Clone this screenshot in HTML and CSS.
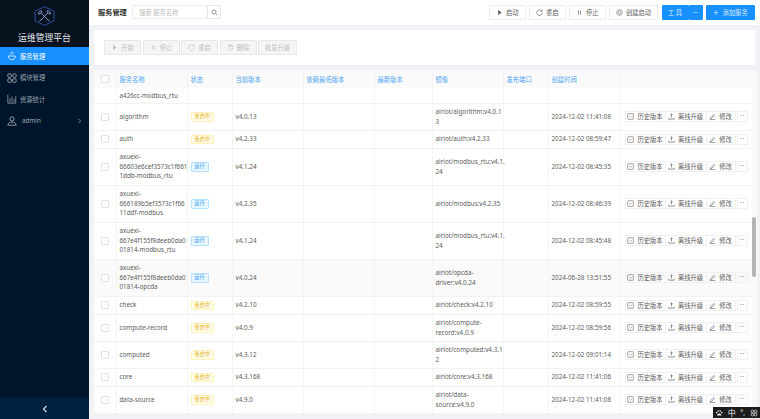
FILE: index.html
```html
<!DOCTYPE html>
<html lang="zh-CN">
<head>
    <meta charset="UTF-8">
    <title>服务管理 - 运维管理平台</title>
    <link rel="stylesheet" href="styles.css">
</head>
<body>
    <svg class="sprites" width="0" height="0">
        <symbol id="i-play" viewBox="0 0 10 10"><path d="M3 1.500 8 5 3 8.500z" fill="currentColor"/></symbol>
        <symbol id="i-reload" viewBox="0 0 10 10"><path d="M8.300 3A4 4 0 1 0 9 5.400M8.600 1v2.300H6.300" fill="none" stroke="currentColor" stroke-width=".9"/></symbol>
        <symbol id="i-pause" viewBox="0 0 10 10"><path d="M3.500 2v6M6.500 2v6" fill="none" stroke="currentColor"/></symbol>
        <symbol id="i-create" viewBox="0 0 10 10"><circle cx="5" cy="5" r="4" fill="none" stroke="currentColor" stroke-width=".8"/><circle cx="5" cy="5" r="1.800" fill="none" stroke="currentColor" stroke-width=".8"/></symbol>
        <symbol id="i-trash" viewBox="0 0 10 10"><path d="M2.500 2.500h5v6h-5zM2 2h6M4 1.200h2" fill="none" stroke="currentColor" stroke-width=".8"/></symbol>
        <symbol id="i-history" viewBox="0 0 10 10"><rect x="1" y="1" width="8" height="8" rx=".8" fill="none" stroke="currentColor" stroke-width=".8"/><path d="M3.500 4.500 5 6l1.500-1.500" fill="none" stroke="currentColor" stroke-width=".8"/></symbol>
        <symbol id="i-upload" viewBox="0 0 10 10"><path d="M5 1v5.500M3.300 3 5 1.300 6.700 3M1 7v1.800h8V7" fill="none" stroke="currentColor" stroke-width=".9"/></symbol>
        <symbol id="i-edit" viewBox="0 0 10 10"><path d="M2 7 6.800 2l1.400 1.300L3.300 8.200 1.800 8.300zM1 9.300h8" fill="none" stroke="currentColor" stroke-width=".8"/></symbol>
    </svg>

    <div class="layout">
        <aside class="sidebar">
            <div class="logo">
                <svg class="logo-mark" viewBox="0 0 21 20">
                    <path d="M10.500 .7 20 5.200v9.600l-9.500 4.500L1 14.800V5.200z" fill="none" stroke="#2d4fa3" stroke-width="1"/>
                    <path d="M6.500 14.500 14 6.800M13 5.200a2.400 2.400 0 0 1 3.400 2.800l-1.700-.4-1.100-1.100zM14.500 14.500 7 6.800M8 5.200a2.400 2.400 0 0 0-3.400 2.800l1.700-.4 1.100-1.100zM5.500 15.200l1.200-1.500M15.500 15.200l-1.200-1.500" fill="none" stroke="#8ea5d6" stroke-width=".9"/>
                </svg>
                <div class="logo-title">运维管理平台</div>
            </div>
            <ul class="menu">
                <li class="menu-item active">
                    <svg class="menu-icon" viewBox="0 0 12 12"><path d="M1.500 6h8.500c0 3-2 4.500-4 4.500S1.500 9 1.500 6zM5 4.500a1.500 1.500 0 1 1 2.500-1.200M6 1.500h1" fill="none" stroke="#fff" stroke-width=".9"/></svg>
                    <span>服务管理</span>
                </li>
                <li class="menu-item">
                    <svg class="menu-icon" viewBox="0 0 12 12"><g fill="none" stroke="#b9c2cc" stroke-width=".9"><rect x="1" y="1" width="4.200" height="4.200" rx="1"/><circle cx="9" cy="3.100" r="2.200"/><rect x="1" y="7" width="4.200" height="4.200" rx="1"/><rect x="6.800" y="7" width="4.200" height="4.200" rx="1"/></g></svg>
                    <span>模块管理</span>
                </li>
                <li class="menu-item">
                    <svg class="menu-icon" viewBox="0 0 12 12"><path d="M1 1v10h10M3.500 5v5M6 3v7M8.500 6v4M10.500 2.500v8" fill="none" stroke="#8f99a5" stroke-width="1"/></svg>
                    <span>资源统计</span>
                </li>
                <li class="menu-item">
                    <svg class="menu-icon" viewBox="0 0 12 12"><circle cx="6" cy="3.500" r="2.500" fill="none" stroke="#b9c2cc" stroke-width=".9"/><path d="M1 11c0-5 10-5 10 0z" fill="none" stroke="#b9c2cc" stroke-width=".9"/></svg>
                    <span class="menu-user">admin</span>
                    <svg class="menu-arrow" viewBox="0 0 6 8"><path d="M1.500 1 4.500 4l-3 3" fill="none" stroke="#8f99a5"/></svg>
                </li>
            </ul>
            <div class="collapse-bar">
                <svg viewBox="0 0 6 8"><path d="M4.500 1 1.500 4l3 3" fill="none" stroke="#dfe5ec" stroke-width="1.100"/></svg>
            </div>
        </aside>

        <div class="main">
            <header class="topbar">
                <h1 class="page-title">服务管理</h1>
                <div class="search">
                    <input class="search-input" type="text" placeholder="搜索 服务名称">
                    <button class="search-btn">
                        <svg viewBox="0 0 10 10"><circle cx="4.300" cy="4.300" r="3" fill="none" stroke="#666" stroke-width=".9"/><path d="M6.500 6.500 9 9" stroke="#666" stroke-width=".9"/></svg>
                    </button>
                </div>
                <div class="top-actions">
                    <button class="btn w-start"><svg class="ico"><use href="#i-play"/></svg>启动</button>
                    <button class="btn w-start"><svg class="ico"><use href="#i-reload"/></svg>重启</button>
                    <button class="btn w-start"><svg class="ico"><use href="#i-pause"/></svg>停止</button>
                    <button class="btn w-create"><svg class="ico"><use href="#i-create"/></svg>创建启动</button>
                    <div class="split">
                        <button class="btn primary w-tool">工 具</button>
                        <button class="btn primary w-dots">···</button>
                    </div>
                    <button class="btn primary w-add"><span class="plus">+</span>添加服务</button>
                </div>
            </header>

            <section class="toolbar">
                <button class="btn disabled"><svg class="ico"><use href="#i-play"/></svg>开始</button>
                <button class="btn disabled"><svg class="ico"><use href="#i-pause"/></svg>停止</button>
                <button class="btn disabled"><svg class="ico"><use href="#i-reload"/></svg>重启</button>
                <button class="btn disabled"><svg class="ico"><use href="#i-trash"/></svg>删除</button>
                <button class="btn disabled">批量升级</button>
            </section>

            <section class="table-card">
                <table class="service-table">
                    <colgroup>
                        <col class="c-check"><col class="c-name"><col class="c-status"><col class="c-ver"><col class="c-ver">
                        <col class="c-latest"><col class="c-ver"><col class="c-port"><col class="c-time"><col>
                    </colgroup>
                    <thead>
                        <tr>
                            <th><span class="check"></span></th>
                            <th>服务名称</th><th>状态</th><th>当前版本</th><th>依赖最低版本</th>
                            <th>最新版本</th><th>镜像</th><th>发布端口</th><th>创建时间</th><th></th>
                        </tr>
                    </thead>
                    <tbody>
                        <tr class="row-cut">
                            <td></td><td>a426cc-modbus_rtu</td><td></td><td></td><td></td><td></td><td></td><td></td><td></td><td></td>
                        </tr>
                        <tr class="row-m">
                            <td><span class="check"></span></td><td>algorithm</td><td><span class="tag warn">重启中</span></td><td>v4.0.13</td><td></td><td></td>
                            <td>airiot/algorithm:v4.0.1<br>3</td><td></td><td>2024-12-02 11:41:08</td>
                            <td><div class="ops"><span class="op w-hist"><svg class="ico"><use href="#i-history"/></svg>历史版本</span><span class="op w-up"><svg class="ico"><use href="#i-upload"/></svg>离线升级</span><span class="op w-edit"><svg class="ico"><use href="#i-edit"/></svg>修改</span><span class="op-more">···</span></div></td>
                        </tr>
                        <tr class="row-s">
                            <td><span class="check"></span></td><td>auth</td><td><span class="tag warn">重启中</span></td><td>v4.2.33</td><td></td><td></td>
                            <td>airiot/auth:v4.2.33</td><td></td><td>2024-12-02 08:59:47</td>
                            <td><div class="ops"><span class="op w-hist"><svg class="ico"><use href="#i-history"/></svg>历史版本</span><span class="op w-up"><svg class="ico"><use href="#i-upload"/></svg>离线升级</span><span class="op w-edit"><svg class="ico"><use href="#i-edit"/></svg>修改</span><span class="op-more">···</span></div></td>
                        </tr>
                        <tr class="row-l">
                            <td><span class="check"></span></td><td>axuexi-<br>66603e6cef3573c1f661<br>1ddb-modbus_rtu</td><td><span class="tag run">运行</span></td><td>v4.1.24</td><td></td><td></td>
                            <td>airiot/modbus_rtu:v4.1.<br>24</td><td></td><td>2024-12-02 08:45:35</td>
                            <td><div class="ops"><span class="op w-hist"><svg class="ico"><use href="#i-history"/></svg>历史版本</span><span class="op w-up"><svg class="ico"><use href="#i-upload"/></svg>离线升级</span><span class="op w-edit"><svg class="ico"><use href="#i-edit"/></svg>修改</span><span class="op-more">···</span></div></td>
                        </tr>
                        <tr class="row-l">
                            <td><span class="check"></span></td><td>axuexi-<br>666189b5ef3573c1f66<br>11ddf-modbus</td><td><span class="tag run">运行</span></td><td>v4.2.35</td><td></td><td></td>
                            <td>airiot/modbus:v4.2.35</td><td></td><td>2024-12-02 08:46:39</td>
                            <td><div class="ops"><span class="op w-hist"><svg class="ico"><use href="#i-history"/></svg>历史版本</span><span class="op w-up"><svg class="ico"><use href="#i-upload"/></svg>离线升级</span><span class="op w-edit"><svg class="ico"><use href="#i-edit"/></svg>修改</span><span class="op-more">···</span></div></td>
                        </tr>
                        <tr class="row-l">
                            <td><span class="check"></span></td><td>axuexi-<br>667e4f155f8deeb0da0<br>01814-modbus_rtu</td><td><span class="tag run">运行</span></td><td>v4.1.24</td><td></td><td></td>
                            <td>airiot/modbus_rtu:v4.1.<br>24</td><td></td><td>2024-12-02 08:45:48</td>
                            <td><div class="ops"><span class="op w-hist"><svg class="ico"><use href="#i-history"/></svg>历史版本</span><span class="op w-up"><svg class="ico"><use href="#i-upload"/></svg>离线升级</span><span class="op w-edit"><svg class="ico"><use href="#i-edit"/></svg>修改</span><span class="op-more">···</span></div></td>
                        </tr>
                        <tr class="row-l hover">
                            <td><span class="check"></span></td><td>axuexi-<br>667e4f155f8deeb0da0<br>01814-opcda</td><td><span class="tag run">运行</span></td><td>v4.0.24</td><td></td><td></td>
                            <td>airiot/opcda-<br>driver:v4.0.24</td><td></td><td>2024-06-28 13:51:55</td>
                            <td><div class="ops"><span class="op w-hist"><svg class="ico"><use href="#i-history"/></svg>历史版本</span><span class="op w-up"><svg class="ico"><use href="#i-upload"/></svg>离线升级</span><span class="op w-edit"><svg class="ico"><use href="#i-edit"/></svg>修改</span><span class="op-more">···</span></div></td>
                        </tr>
                        <tr class="row-s">
                            <td><span class="check"></span></td><td>check</td><td><span class="tag warn">重启中</span></td><td>v4.2.10</td><td></td><td></td>
                            <td>airiot/check:v4.2.10</td><td></td><td>2024-12-02 08:59:55</td>
                            <td><div class="ops"><span class="op w-hist"><svg class="ico"><use href="#i-history"/></svg>历史版本</span><span class="op w-up"><svg class="ico"><use href="#i-upload"/></svg>离线升级</span><span class="op w-edit"><svg class="ico"><use href="#i-edit"/></svg>修改</span><span class="op-more">···</span></div></td>
                        </tr>
                        <tr class="row-m">
                            <td><span class="check"></span></td><td>compute-record</td><td><span class="tag warn">重启中</span></td><td>v4.0.9</td><td></td><td></td>
                            <td>airiot/compute-<br>record:v4.0.9</td><td></td><td>2024-12-02 08:59:56</td>
                            <td><div class="ops"><span class="op w-hist"><svg class="ico"><use href="#i-history"/></svg>历史版本</span><span class="op w-up"><svg class="ico"><use href="#i-upload"/></svg>离线升级</span><span class="op w-edit"><svg class="ico"><use href="#i-edit"/></svg>修改</span><span class="op-more">···</span></div></td>
                        </tr>
                        <tr class="row-m">
                            <td><span class="check"></span></td><td>computed</td><td><span class="tag warn">重启中</span></td><td>v4.3.12</td><td></td><td></td>
                            <td>airiot/computed:v4.3.1<br>2</td><td></td><td>2024-12-02 09:01:14</td>
                            <td><div class="ops"><span class="op w-hist"><svg class="ico"><use href="#i-history"/></svg>历史版本</span><span class="op w-up"><svg class="ico"><use href="#i-upload"/></svg>离线升级</span><span class="op w-edit"><svg class="ico"><use href="#i-edit"/></svg>修改</span><span class="op-more">···</span></div></td>
                        </tr>
                        <tr class="row-s">
                            <td><span class="check"></span></td><td>core</td><td><span class="tag warn">重启中</span></td><td>v4.3.168</td><td></td><td></td>
                            <td>airiot/core:v4.3.168</td><td></td><td>2024-12-02 11:41:06</td>
                            <td><div class="ops"><span class="op w-hist"><svg class="ico"><use href="#i-history"/></svg>历史版本</span><span class="op w-up"><svg class="ico"><use href="#i-upload"/></svg>离线升级</span><span class="op w-edit"><svg class="ico"><use href="#i-edit"/></svg>修改</span><span class="op-more">···</span></div></td>
                        </tr>
                        <tr class="row-m">
                            <td><span class="check"></span></td><td>data-source</td><td><span class="tag warn">重启中</span></td><td>v4.9.0</td><td></td><td></td>
                            <td>airiot/data-<br>source:v4.9.0</td><td></td><td>2024-12-02 11:41:08</td>
                            <td><div class="ops"><span class="op w-hist"><svg class="ico"><use href="#i-history"/></svg>历史版本</span><span class="op w-up"><svg class="ico"><use href="#i-upload"/></svg>离线升级</span><span class="op w-edit"><svg class="ico"><use href="#i-edit"/></svg>修改</span><span class="op-more">···</span></div></td>
                        </tr>
                    </tbody>
                </table>
                <div class="scroll-track"><div class="scroll-thumb"></div></div>
            </section>
        </div>
    </div>

    <div class="ime">
        <svg viewBox="0 0 10 10"><circle cx="2" cy="4.500" r="1" fill="#eee"/><circle cx="4" cy="2.500" r="1" fill="#eee"/><circle cx="6.500" cy="2.500" r="1" fill="#eee"/><circle cx="8.500" cy="4.500" r="1" fill="#eee"/><path d="M2.500 8c0-3 5.500-3 5.500 0z" fill="#eee"/></svg>
        <span>中</span>
        <span class="ime-punct">°,</span>
        <svg viewBox="0 0 10 10"><g fill="none" stroke="#ddd" stroke-width="1"><circle cx="3" cy="3" r="1.700"/><circle cx="7" cy="3" r="1.700"/><circle cx="3" cy="7" r="1.700"/><circle cx="7" cy="7" r="1.700"/></g></svg>
    </div>
</body>
</html>
```

FILE: styles.css
```css
* {
    box-sizing: border-box;
    margin: 0;
    padding: 0;
    font-family: "Noto Sans", "Noto Sans CJK SC", sans-serif;
}

body {
    width: 760px;
    height: 419px;
    overflow: hidden;
    background-color: #f0f2f5;
    color: #5c5c5c;
    font-size: 6.300px;
}

.sprites {
    position: absolute;
}

.layout {
    display: flex;
    height: 419px;
}

/* 侧边栏 */
.sidebar {
    width: 89px;
    flex-shrink: 0;
    display: flex;
    flex-direction: column;
    background-color: #00152b;
}

.logo {
    height: 47px;
    padding-top: 6px;
    background-color: #08121f;
    text-align: center;
}

.logo-mark {
    display: block;
    width: 21px;
    height: 20px;
    margin: 0 auto;
}

.logo-title {
    margin-top: 6px;
    color: #e4e8ee;
    font-size: 8.800px;
    line-height: 13px;
}

.menu {
    flex: 1;
    list-style: none;
}

.menu-item {
    display: flex;
    align-items: center;
    height: 18px;
    margin-bottom: 3.500px;
    padding-left: 7px;
    color: #9aa5b1;
}

.menu-item.active {
    background-color: #1890ff;
    color: #fff;
}

.menu-icon {
    width: 10px;
    height: 10px;
    margin-right: 3px;
    flex-shrink: 0;
}

.menu-user {
    margin-left: 2px;
}

.menu-arrow {
    width: 5px;
    height: 6px;
    margin-left: auto;
    margin-right: 7px;
}

.collapse-bar {
    display: flex;
    align-items: center;
    justify-content: center;
    height: 21px;
    background-color: #002140;
}

.collapse-bar svg {
    width: 6px;
    height: 8px;
}

/* 右侧内容 */
.main {
    flex: 1;
    min-width: 0;
}

.topbar {
    display: flex;
    align-items: center;
    height: 25px;
    padding: 0 5px 1px 9px;
    background-color: #fff;
}

.page-title {
    width: 34px;
    color: #333;
    font-size: 7.200px;
    font-weight: 700;
}

.search {
    display: flex;
    height: 14px;
}

.search-input {
    width: 75px;
    padding-left: 6px;
    border: 1px solid #eee;
    border-right: none;
    border-radius: 1px 0 0 1px;
    font-size: 6.300px;
    outline: none;
}

.search-input::placeholder {
    color: #bbb;
}

.search-btn {
    display: flex;
    align-items: center;
    justify-content: center;
    width: 14px;
    border: 1px solid #e5e5e5;
    border-radius: 0 1px 1px 0;
    background-color: #fff;
}

.search-btn svg {
    width: 7px;
    height: 7px;
}

.top-actions {
    display: flex;
    gap: 3.500px;
    margin-left: auto;
}

.btn {
    display: flex;
    align-items: center;
    justify-content: center;
    height: 15px;
    border: 1px solid #eeeeee;
    border-radius: 1px;
    background-color: #fff;
    color: #5c5c5c;
    font-size: 6.300px;
}

.btn.primary {
    border-color: #1890ff;
    background-color: #1890ff;
    color: #d5eaff;
}

.btn.disabled {
    width: 37px;
    border-color: #e8e8e8;
    background-color: #f5f5f5;
    color: #c0c0c0;
}

.btn.disabled:last-child {
    width: 39px;
}

.ico {
    width: 7px;
    height: 7px;
    margin-right: 3px;
    flex-shrink: 0;
}

.w-start {
    width: 36.500px;
}

.w-create {
    width: 49px;
}

.split {
    display: flex;
}

.w-tool {
    width: 27px;
    border-right-color: #4aa8ff;
}

.w-dots {
    width: 14px;
}

.w-add {
    width: 49px;
}

.plus {
    margin-right: 4px;
    font-size: 9px;
    line-height: 9px;
}

.toolbar {
    display: flex;
    gap: 1.500px;
    height: 35px;
    margin: 5px;
    padding: 10px 10px 0;
    background-color: #fff;
}

/* 表格 */
.table-card {
    position: relative;
    height: 343px;
    margin: 0 3px 0 5px;
    background-color: #fff;
    overflow: hidden;
}

.service-table {
    width: 659px;
    border-collapse: collapse;
    table-layout: fixed;
}

.c-check {
    width: 22px;
}

.c-name {
    width: 71px;
}

.c-status {
    width: 45px;
}

.c-ver {
    width: 71px;
}

.c-latest {
    width: 58px;
}

.c-port {
    width: 45px;
}

.c-time {
    width: 72px;
}

.service-table th {
    height: 18px;
    padding: 0 3px;
    border-right: 1px solid #f2f2f2;
    background-color: #fafafa;
    color: #4da3f5;
    font-size: 6.300px;
    font-weight: 400;
    text-align: left;
}

.service-table td {
    padding: 0 0 0 3px;
    border-right: 1px solid #f5f5f5;
    border-bottom: 1px solid #f2f2f2;
    line-height: 9.700px;
    white-space: nowrap;
    vertical-align: middle;
}

.service-table th:first-child,
.service-table td:first-child {
    padding: 0 0 0 7px;
}

.service-table tr.row-cut td {
    height: 15px;
    padding-top: 1px;
}

.service-table tr.row-s td {
    height: 18px;
}

.service-table tr.row-m td {
    height: 27px;
}

.service-table tr.row-l td {
    height: 37px;
}

.service-table tr.hover td {
    background-color: #fafafa;
}

.check {
    display: block;
    width: 8px;
    height: 8px;
    border: 1px solid #e3e3e3;
    border-radius: 1px;
    background-color: #fff;
}

.tag {
    display: inline-block;
    height: 9.500px;
    border-radius: 1px;
    font-size: 5.200px;
    line-height: 7.500px;
    text-align: center;
    vertical-align: middle;
}

.tag.warn {
    width: 23.500px;
    border: 1px solid #fff1b8;
    background-color: #fffbe6;
    color: #e3b52a;
}

.tag.run {
    width: 18px;
    border: 1px solid #bae0ff;
    background-color: #e6f7ff;
    color: #3a9cf5;
}

.ops {
    display: flex;
    height: 11px;
    margin-left: 1px;
}

.op {
    display: flex;
    align-items: center;
    justify-content: center;
    height: 11px;
    border: 1px solid #f0f0f0;
    border-left: none;
    line-height: 9px;
}

.op:first-child {
    border-left: 1px solid #f0f0f0;
}

.w-hist {
    width: 41px;
}

.w-up {
    width: 41px;
}

.w-edit {
    width: 29px;
}

.op-more {
    width: 11px;
    height: 11px;
    margin-left: 1px;
    border: 1px solid #f0f0f0;
    color: #999;
    line-height: 8px;
    text-align: center;
}

.scroll-track {
    position: absolute;
    top: 0;
    right: 0;
    width: 5px;
    height: 343px;
    background-color: #f9f9f9;
}

.scroll-thumb {
    width: 4px;
    height: 60px;
    margin-top: 147px;
    border-radius: 2px;
    background-color: #b5b5b5;
}

/* 输入法状态 */
.ime {
    position: absolute;
    left: 713px;
    top: 407px;
    display: flex;
    align-items: center;
    justify-content: space-around;
    width: 47px;
    height: 11px;
    background-color: #1c1c1c;
    color: #eee;
    font-size: 8px;
}

.ime svg {
    width: 8px;
    height: 8px;
}

.ime-punct {
    font-size: 7px;
}
```
